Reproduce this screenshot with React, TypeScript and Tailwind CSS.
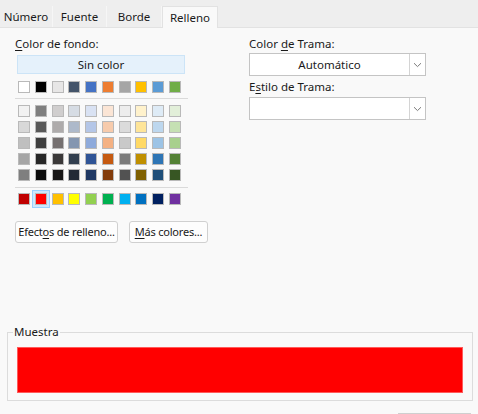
import React from "react";

const top = ["#FFFFFF", "#000000", "#E7E6E6", "#44546A", "#4472C4", "#ED7D31", "#A5A5A5", "#FFC000", "#5B9BD5", "#70AD47"];
const tints = [
  ["#F2F2F2", "#7F7F7F", "#D0CECE", "#D6DCE4", "#D9E2F3", "#FBE5D5", "#EDEDED", "#FFF2CC", "#DEEBF6", "#E2EFD9"],
  ["#D8D8D8", "#595959", "#AEABAB", "#ADB9CA", "#B4C6E7", "#F7CBAC", "#DBDBDB", "#FEE599", "#BDD7EE", "#C5E0B3"],
  ["#BFBFBF", "#3F3F3F", "#757070", "#8496B0", "#8EAADB", "#F4B183", "#C9C9C9", "#FFD965", "#9CC3E5", "#A8D08D"],
  ["#A5A5A5", "#262626", "#3A3838", "#323F4F", "#2F5496", "#C55A11", "#7B7B7B", "#BF8F00", "#2E75B5", "#538135"],
  ["#7F7F7F", "#0C0C0C", "#171616", "#222A35", "#1F3864", "#833C0B", "#525252", "#7F6000", "#1E4E79", "#375623"],
];
const standard = ["#C00000", "#FF0000", "#FFC000", "#FFFF00", "#92D050", "#00B050", "#00B0F0", "#0070C0", "#002060", "#7030A0"];

function Swatch({ c, selected }: { c: string; selected?: boolean }) {
  return (
    <div className="relative w-[12px] h-[12px]">
      {selected && (
        <div className="absolute -left-[3px] -top-[3px] w-[18px] h-[18px] bg-[#cce8ff] border border-[#99d1ff]" />
      )}
      <div className="relative w-[12px] h-[12px] border border-[#b9b9b9]" style={{ backgroundColor: c }} />
    </div>
  );
}

function Row({ colors, sel }: { colors: string[]; sel?: number }) {
  return (
    <div className="flex justify-between w-[163px] ml-[3px]">
      {colors.map((c, i) => (
        <Swatch key={i} c={c} selected={sel === i} />
      ))}
    </div>
  );
}

function Chevron() {
  return (
    <svg width="9" height="6" viewBox="0 0 9 6">
      <path d="M1 1.2 L4.5 4.6 L8 1.2" fill="none" stroke="#7a7a7a" strokeWidth="1" />
    </svg>
  );
}

function Combo({ text }: { text?: string }) {
  return (
    <div className="flex w-[177px] h-[23px] border border-[#c4c4c4] bg-white">
      <div className="flex-1 flex items-center justify-center text-[#1a1a1a]">{text}</div>
      <div className="w-[16px] border-l border-[#d4d4d4] flex items-center justify-center">
        <Chevron />
      </div>
    </div>
  );
}

export default function App() {
  const tabs = ["Número", "Fuente", "Borde"];
  return (
    <div
      className="w-[478px] h-[414px] overflow-hidden bg-[#f9f9f9] flex flex-col text-[11.5px] text-[#1a1a1a]"
      style={{ fontFamily: '"Noto Sans", "Segoe UI", sans-serif' }}
    >
      <div className="h-[28px] shrink-0 bg-[#eeeeee] border-b border-[#e2e2e2] flex items-end">
        {tabs.map((t, i) => (
          <div
            key={t}
            className={
              "h-[21px] flex items-center justify-center border-r border-[#f6f6f6] " +
              (i === 0 ? "w-[53px]" : i === 1 ? "w-[54px]" : "w-[55px]")
            }
          >
            {t}
          </div>
        ))}
        <div className="w-[56px] h-[22px] -mb-px bg-[#f9f9f9] border-x border-t border-[#e2e2e2] flex items-center justify-center">
          Relleno
        </div>
      </div>

      <div className="flex shrink-0">
        <div className="w-[234px] pl-[15px] pt-[8px] flex flex-col">
          <div className="leading-[16px]">
            <span className="underline underline-offset-2">C</span>olor de fondo:
          </div>
          <div className="mt-[3px] ml-[2px] w-[168px] h-[19px] bg-[#e5f1fb] border border-[#cce4f7] flex items-center justify-center">
            Sin color
          </div>
          <div className="mt-[7px]">
            <Row colors={top} />
          </div>
          <div className="mt-[5px] w-[173px] h-px bg-[#dadada]" />
          <div className="mt-[5.5px] flex flex-col gap-[4.2px]">
            {tints.map((r, i) => (
              <Row key={i} colors={r} />
            ))}
          </div>
          <div className="mt-[5.5px] w-[173px] h-px bg-[#dadada]" />
          <div className="mt-[5.5px]">
            <Row colors={standard} sel={1} />
          </div>
          <div className="mt-[16px] flex gap-[11px] text-[11px] tracking-[-0.2px]">
            <div className="w-[103px] h-[22px] bg-[#fdfdfd] border border-[#d0d0d0] rounded-[3px] flex items-center justify-center">
              <span className="whitespace-nowrap">
                Efect<span className="underline underline-offset-2">o</span>s de relleno...
              </span>
            </div>
            <div className="w-[79px] h-[22px] bg-[#fdfdfd] border border-[#d0d0d0] rounded-[3px] flex items-center justify-center">
              <span className="whitespace-nowrap">
                <span className="underline underline-offset-2">M</span>ás colores...
              </span>
            </div>
          </div>
        </div>

        <div className="pl-[15px] pt-[8px] flex flex-col">
          <div className="leading-[16px]">
            Color <span className="underline underline-offset-2">d</span>e Trama:
          </div>
          <div className="mt-[1px]">
            <Combo text="Automático" />
          </div>
          <div className="mt-[3px] leading-[16px]">
            E<span className="underline underline-offset-2">s</span>tilo de Trama:
          </div>
          <div className="mt-[2px]">
            <Combo />
          </div>
        </div>
      </div>

      <div className="relative mt-[89px] ml-[7px] w-[466px] h-[69px] shrink-0 border border-[#dcdcdc]">
        <div className="absolute left-[5px] -top-[9px] px-[1px] bg-[#f9f9f9] leading-[16px]">Muestra</div>
        <div className="mt-[14px] ml-[9px] w-[446px] h-[46px] bg-[#ff0000] border border-[#ff5a5a]" />
      </div>

      <div className="mt-[12px] ml-[398px] w-[73px] h-[22px] shrink-0 border border-[#cfcfcf] bg-[#f0f0f0]" />
    </div>
  );
}
